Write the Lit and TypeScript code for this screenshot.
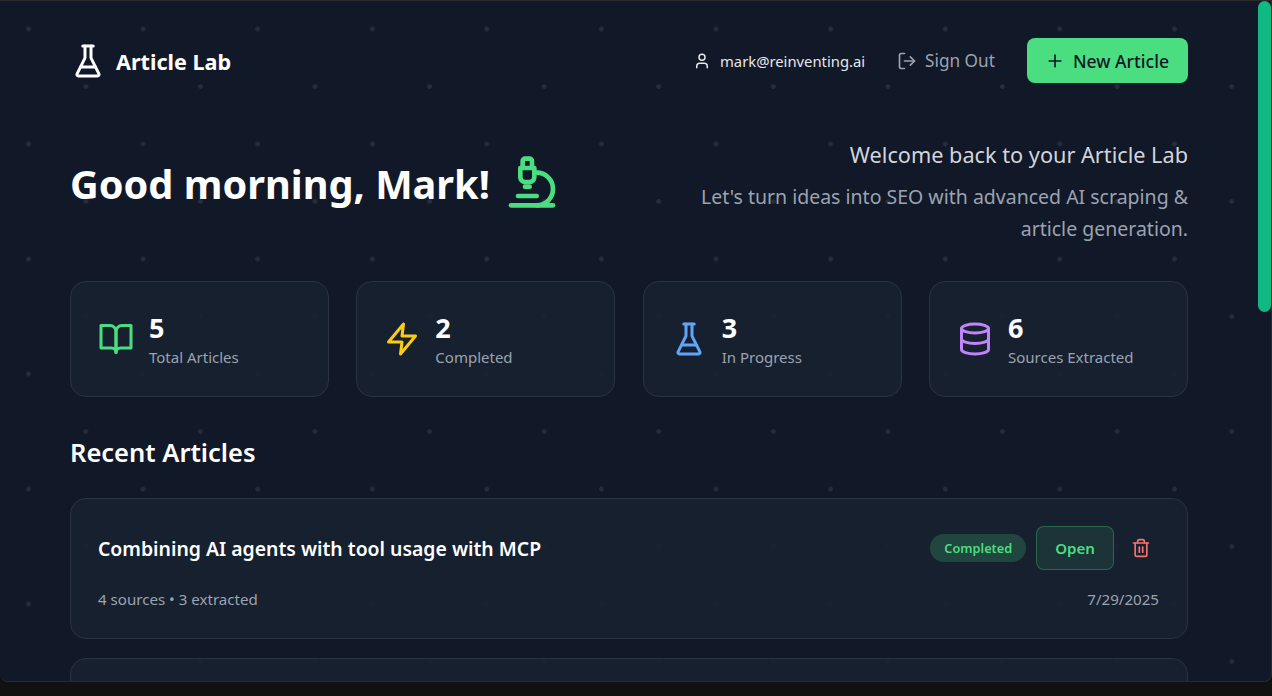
import { LitElement, html, css, svg } from 'lit';
import { customElement } from 'lit/decorators.js';

const flask = svg`<path d="M10 2v7.527a2 2 0 0 1-.211.896L4.72 20.55a1 1 0 0 0 .9 1.45h12.76a1 1 0 0 0 .9-1.45l-5.069-10.127A2 2 0 0 1 14 9.527V2"/><path d="M8.5 2h7"/><path d="M7 16h10"/>`;

const stats = [
  { value: '5', label: 'Total Articles', color: '#4ade80', icon: svg`<path d="M2 3h6a4 4 0 0 1 4 4v14a3 3 0 0 0-3-3H2z"/><path d="M22 3h-6a4 4 0 0 0-4 4v14a3 3 0 0 1 3-3h7z"/>` },
  { value: '2', label: 'Completed', color: '#facc15', icon: svg`<path d="M13 2 3 14h9l-1 8 10-12h-9l1-8z"/>` },
  { value: '3', label: 'In Progress', color: '#60a5fa', icon: flask },
  { value: '6', label: 'Sources Extracted', color: '#c084fc', icon: svg`<ellipse cx="12" cy="5" rx="9" ry="3"/><path d="M3 5v14a9 3 0 0 0 18 0V5"/><path d="M3 12a9 3 0 0 0 18 0"/>` },
];

@customElement('app-root')
export class AppRoot extends LitElement {
  static styles = css`
    :host {
      display: block;
      height: 696px;
      background: #111111;
      font-family: 'Noto Sans', 'Open Sans', sans-serif;
      overflow: hidden;
    }
    svg {
      display: block;
      fill: none;
      stroke: currentColor;
      stroke-width: 2;
      stroke-linecap: round;
      stroke-linejoin: round;
      flex: none;
    }
    .frame {
      height: 682px;
      box-sizing: border-box;
      display: flex;
      border-top: 1px solid #2b2b2b;
      border-bottom: 1px solid #2b2b2b;
      border-right: 1px solid #2b2b2b;
      border-radius: 0 0 8px 8px;
      overflow: hidden;
      background-color: #111827;
      background-image:
        radial-gradient(circle at center, #262c3a 2px, transparent 2.6px),
        radial-gradient(circle at center, #262c3a 2px, transparent 2.6px);
      background-size: 114.6px 115px;
      background-position: -28.8px -29.5px, 28.5px 28px;
    }
    main {
      flex: 1;
      min-width: 0;
      padding: 37px 70px 0;
    }
    .track {
      width: 13px;
      flex: none;
    }
    .thumb {
      height: 311px;
      background: #10b981;
      border-radius: 7px;
    }
    header {
      display: flex;
      align-items: center;
      justify-content: space-between;
      height: 45px;
    }
    .logo {
      display: flex;
      align-items: center;
      gap: 10px;
      color: #fff;
      font-size: 21.6px;
      font-weight: 700;
    }
    .logo span {
      margin-top: 2px;
    }
    .nav {
      display: flex;
      align-items: center;
    }
    .user {
      display: flex;
      align-items: center;
      gap: 9px;
      color: #e5e7eb;
      font-size: 14.8px;
    }
    .signout {
      display: flex;
      align-items: center;
      gap: 8px;
      margin-left: 32px;
      color: #9ca3af;
      font-size: 17.2px;
    }
    .new {
      display: flex;
      align-items: center;
      gap: 8px;
      margin-left: 32px;
      height: 45px;
      box-sizing: border-box;
      padding: 0 19px 0 18px;
      border-radius: 8px;
      background: #4ade80;
      color: #111827;
      font-size: 17.6px;
      font-weight: 500;
    }
    .hero {
      display: flex;
      justify-content: space-between;
      margin-top: 58px;
    }
    .greet {
      display: flex;
      align-items: center;
      gap: 14px;
      height: 60px;
      margin-top: 13px;
    }
    h1 {
      margin: 0;
      color: #fff;
      font-size: 39.7px;
      font-weight: 700;
      line-height: 60px;
    }
    .greet svg {
      color: #4ade80;
      margin-bottom: 5px;
    }
    .welcome {
      width: 500px;
      text-align: right;
    }
    .welcome p {
      margin: 0;
    }
    .line1 {
      color: #d1d5db;
      font-size: 21.7px;
      line-height: 28px;
    }
    .welcome .line2 {
      margin-top: 12px;
      color: #9ca3af;
      font-size: 19.5px;
      line-height: 32px;
    }
    .stats {
      display: grid;
      grid-template-columns: repeat(4, 1fr);
      gap: 27.4px;
      margin-top: 36px;
    }
    .stat {
      display: flex;
      align-items: center;
      gap: 15px;
      height: 116px;
      box-sizing: border-box;
      padding: 0 27px;
      border: 1px solid #2a3342;
      border-radius: 16px;
      background: rgba(24, 33, 48, 0.93);
    }
    .num {
      color: #fff;
      font-size: 27px;
      font-weight: 700;
      line-height: 36px;
    }
    .label {
      color: #9ca3af;
      font-size: 15px;
      line-height: 22px;
    }
    h2 {
      margin: 37px 0 0;
      color: #fff;
      font-size: 25.5px;
      font-weight: 600;
      line-height: 36px;
    }
    .card {
      box-sizing: border-box;
      height: 141px;
      margin-top: 28px;
      padding: 27px 28px 0 27px;
      border: 1px solid #2a3342;
      border-radius: 16px;
      background: rgba(24, 33, 48, 0.93);
    }
    .card + .card {
      margin-top: 19px;
    }
    .row {
      display: flex;
      align-items: center;
      justify-content: space-between;
    }
    .title {
      color: #fff;
      font-size: 19.4px;
      font-weight: 600;
    }
    .actions {
      display: flex;
      align-items: center;
    }
    .badge {
      padding: 0 14px;
      height: 28px;
      display: flex;
      align-items: center;
      border-radius: 14px;
      background: rgba(74, 222, 128, 0.2);
      color: #4ade80;
      font-size: 12.75px;
      font-weight: 600;
    }
    .open {
      display: flex;
      align-items: center;
      box-sizing: border-box;
      height: 44px;
      margin-left: 10px;
      padding: 0 18px;
      border: 1px solid rgba(74, 222, 128, 0.3);
      border-radius: 8px;
      background: rgba(74, 222, 128, 0.1);
      color: #4ade80;
      font-size: 15.1px;
      font-weight: 600;
    }
    .trash {
      margin: 0 8px 0 17px;
      color: #f87171;
    }
    .meta {
      margin-top: 19px;
      color: #9ca3af;
      font-size: 15.1px;
      line-height: 20px;
    }
  `;

  render() {
    return html`
      <div class="frame">
        <main>
          <header>
            <div class="logo">
              <svg width="36" height="36" viewBox="0 0 24 24">${flask}</svg>
              <span>Article Lab</span>
            </div>
            <div class="nav">
              <div class="user">
                <svg width="18" height="18" viewBox="0 0 24 24"><path d="M19 21v-2a4 4 0 0 0-4-4H9a4 4 0 0 0-4 4v2"/><circle cx="12" cy="7" r="4"/></svg>
                <span>mark@reinventing.ai</span>
              </div>
              <div class="signout">
                <svg width="20" height="20" viewBox="0 0 24 24"><path d="M9 21H5a2 2 0 0 1-2-2V5a2 2 0 0 1 2-2h4"/><path d="m16 17 5-5-5-5"/><path d="M21 12H9"/></svg>
                <span>Sign Out</span>
              </div>
              <div class="new">
                <svg width="20" height="20" viewBox="0 0 24 24"><path d="M5 12h14"/><path d="M12 5v14"/></svg>
                <span>New Article</span>
              </div>
            </div>
          </header>

          <section class="hero">
            <div class="greet">
              <h1>Good morning, Mark!</h1>
              <svg width="56" height="56" viewBox="0 0 24 24"><path d="M6 18h8"/><path d="M3 22h18"/><path d="M14 22a7 7 0 1 0 0-14h-1"/><path d="M9 14h2"/><path d="M9 12a2 2 0 0 1-2-2V6h6v4a2 2 0 0 1-2 2Z"/><path d="M12 6V3a1 1 0 0 0-1-1H9a1 1 0 0 0-1 1v3"/></svg>
            </div>
            <div class="welcome">
              <p class="line1">Welcome back to your Article Lab</p>
              <p class="line2">Let's turn ideas into SEO with advanced AI scraping &amp; article generation.</p>
            </div>
          </section>

          <section class="stats">
            ${stats.map(
              (s) => html`
                <div class="stat">
                  <svg width="36" height="36" viewBox="0 0 24 24" style="color: ${s.color}">${s.icon}</svg>
                  <div>
                    <div class="num">${s.value}</div>
                    <div class="label">${s.label}</div>
                  </div>
                </div>
              `,
            )}
          </section>

          <h2>Recent Articles</h2>

          <div class="card">
            <div class="row">
              <div class="title">Combining AI agents with tool usage with MCP</div>
              <div class="actions">
                <span class="badge">Completed</span>
                <span class="open">Open</span>
                <svg class="trash" width="20" height="20" viewBox="0 0 24 24"><path d="M3 6h18"/><path d="M19 6v14a2 2 0 0 1-2 2H7a2 2 0 0 1-2-2V6"/><path d="M8 6V4a2 2 0 0 1 2-2h4a2 2 0 0 1 2 2v2"/><line x1="10" x2="10" y1="11" y2="17"/><line x1="14" x2="14" y1="11" y2="17"/></svg>
              </div>
            </div>
            <div class="row meta">
              <span>4 sources • 3 extracted</span>
              <span>7/29/2025</span>
            </div>
          </div>
          <div class="card"></div>
        </main>
        <div class="track"><div class="thumb"></div></div>
      </div>
    `;
  }
}
